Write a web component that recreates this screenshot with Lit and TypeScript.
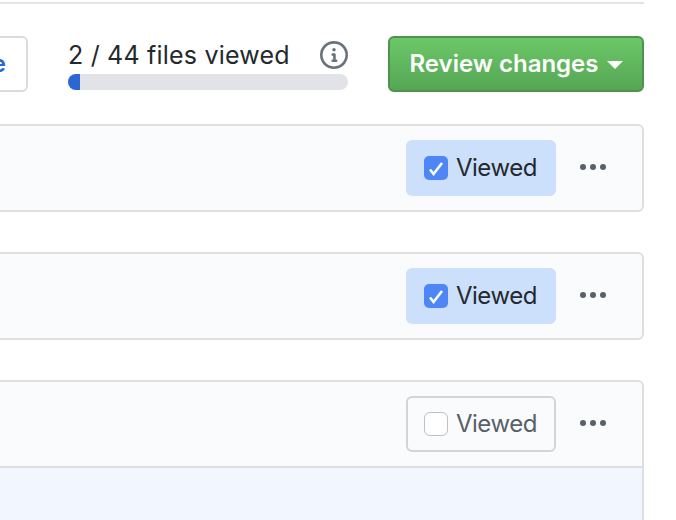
import { LitElement, html, css, svg } from 'lit';
import { customElement } from 'lit/decorators.js';

const infoIcon = svg`<path fill-rule="evenodd" d="M8 1.5a6.5 6.5 0 100 13 6.5 6.5 0 000-13zM0 8a8 8 0 1116 0A8 8 0 010 8zm6.5-.25A.75.75 0 017.25 7h1a.75.75 0 01.75.75v2.75h.25a.75.75 0 010 1.5h-2a.75.75 0 010-1.5h.25v-2h-.25a.75.75 0 01-.75-.75zM8 6a1 1 0 100-2 1 1 0 000 2z"/>`;

const kebabIcon = svg`<circle cx="4" cy="13" r="3"/><circle cx="14" cy="13" r="3"/><circle cx="24" cy="13" r="3"/>`;

@customElement('app-root')
export class AppRoot extends LitElement {
    static styles = css`
        :host {
            display: block;
            width: 676px;
            height: 520px;
            overflow: hidden;
            background: #fff;
            font-family: Inter, "Liberation Sans", sans-serif;
            color: #24292e;
        }
        .page {
            width: 644px;
            padding-top: 2px;
        }
        .toolbar {
            display: flex;
            justify-content: flex-end;
            align-items: flex-start;
            border-top: 2px solid #e4e4ec;
            padding-top: 32px;
            height: 88px;
            box-sizing: border-box;
        }
        .compare {
            flex: none;
            height: 56px;
            box-sizing: border-box;
            margin-right: 40px;
            padding-right: 20px;
            border: 2px solid #d9dbde;
            border-radius: 6px;
            font-size: 24px;
            font-weight: 600;
            line-height: 52px;
            color: #2b66d3;
            white-space: nowrap;
        }
        .progress {
            flex: none;
            width: 280px;
            margin-right: 40px;
        }
        .progress-label {
            display: flex;
            justify-content: space-between;
            align-items: center;
            height: 38px;
            font-size: 25px;
            letter-spacing: 0.2px;
        }
        .progress-label span {
            margin-top: -1px;
        }
        .progress-label svg {
            width: 28px;
            height: 28px;
            fill: #6a737d;
        }
        .bar {
            height: 16px;
            border-radius: 8px;
            background: #e1e3e8;
            overflow: hidden;
        }
        .bar div {
            width: 12px;
            height: 100%;
            background: #2b66d3;
        }
        .review {
            flex: none;
            display: flex;
            align-items: center;
            justify-content: center;
            gap: 8px;
            width: 256px;
            height: 56px;
            box-sizing: border-box;
            padding-bottom: 2px;
            border: 2px solid #4f9150;
            border-radius: 6px;
            background: linear-gradient(#6cc867, #55a654);
            color: #fff;
            font-size: 24px;
            font-weight: 600;
        }
        .caret {
            border: 8px solid transparent;
            border-top-color: #fff;
            border-bottom: 0;
            margin-top: 4px;
        }
        .card {
            margin-top: 34px;
            margin-left: -8px;
            border: 2px solid #dddee0;
            border-left: 0;
            border-radius: 0 6px 6px 0;
            background: #fafbfd;
        }
        .card + .card {
            margin-top: 40px;
        }
        .card.open {
            border-bottom: 0;
            border-radius: 0 6px 0 0;
        }
        .head {
            display: flex;
            justify-content: flex-end;
            align-items: center;
            height: 84px;
            padding-right: 35px;
        }
        .viewed {
            display: flex;
            align-items: center;
            gap: 8px;
            width: 150px;
            height: 56px;
            box-sizing: border-box;
            padding-left: 18px;
            border-radius: 6px;
            font-size: 24px;
            letter-spacing: -0.5px;
            background: #cce0fc;
        }
        .viewed .label {
            margin-top: -2px;
        }
        .viewed.off {
            padding-left: 16px;
            border: 2px solid #d1d5da;
            background: transparent;
            color: #586069;
        }
        .box {
            width: 24px;
            height: 24px;
            box-sizing: border-box;
            border-radius: 5px;
            background: #4e87f5;
        }
        .box svg {
            display: block;
            width: 24px;
            height: 24px;
            fill: none;
            stroke: #fff;
            stroke-width: 2.6;
        }
        .off .box {
            border: 1.5px solid #bcbfc3;
            border-radius: 6px;
            background: #fff;
        }
        .kebab {
            width: 28px;
            height: 28px;
            margin-left: 23px;
            fill: #586069;
        }
        .diff {
            height: 60px;
            border-top: 2px solid #dddee0;
            background: #f2f7ff;
        }
    `;

    private renderHead(checked: boolean) {
        return html`
            <div class="head">
                <div class="viewed ${checked ? '' : 'off'}">
                    <span class="box">
                        ${checked
                            ? html`<svg viewBox="0 0 24 24">${svg`<path d="M6 13.5l3.6 4.5L18 7"/>`}</svg>`
                            : ''}
                    </span>
                    <span class="label">Viewed</span>
                </div>
                <svg class="kebab" viewBox="0 0 28 28">${kebabIcon}</svg>
            </div>
        `;
    }

    render() {
        return html`
            <div class="page">
                <div class="toolbar">
                    <div class="compare">Compare</div>
                    <div class="progress">
                        <div class="progress-label">
                            <span>2 / 44 files viewed</span>
                            <svg viewBox="0 0 16 16">${infoIcon}</svg>
                        </div>
                        <div class="bar"><div></div></div>
                    </div>
                    <div class="review">Review changes <span class="caret"></span></div>
                </div>
                <div class="card">${this.renderHead(true)}</div>
                <div class="card">${this.renderHead(true)}</div>
                <div class="card open">
                    ${this.renderHead(false)}
                    <div class="diff"></div>
                </div>
            </div>
        `;
    }
}
